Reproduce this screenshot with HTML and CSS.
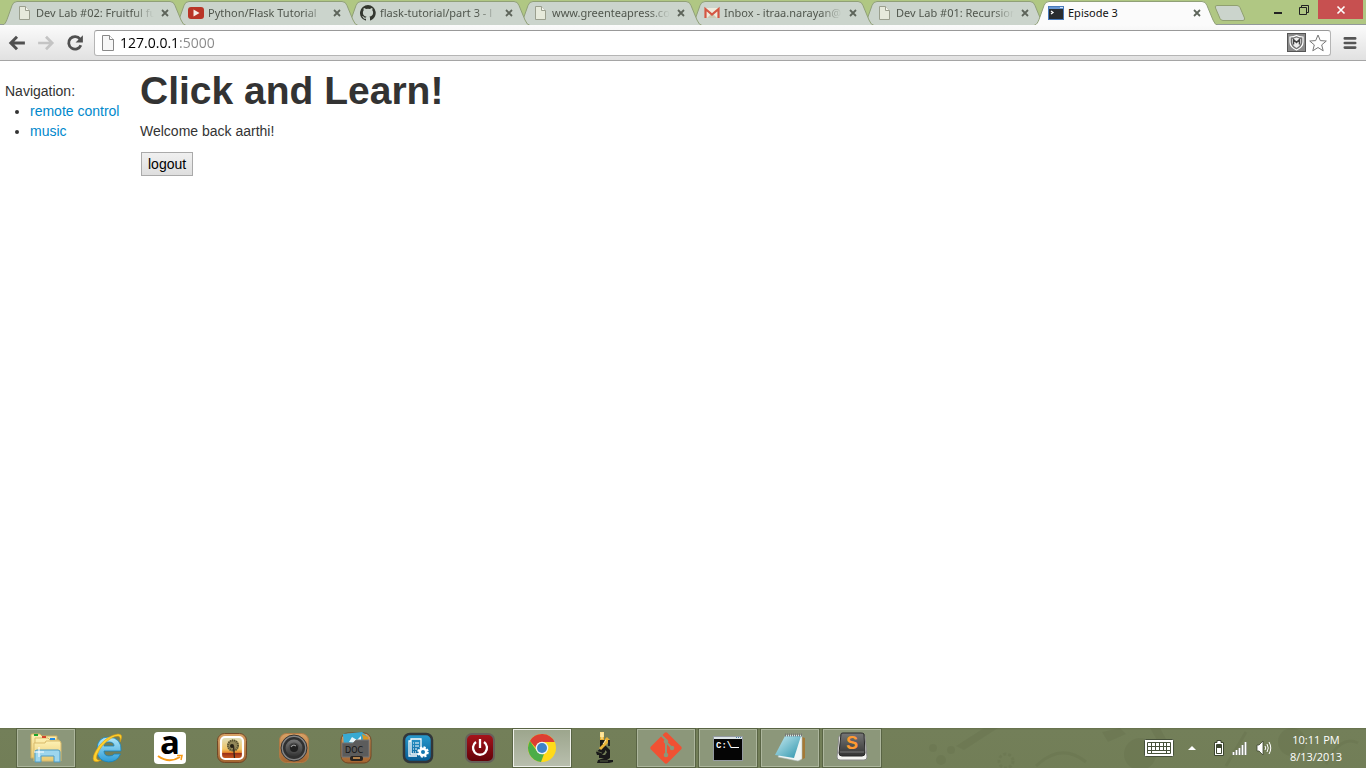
FILE: index.html
```html
<!DOCTYPE html>
<html lang="en">
<head>
<meta charset="utf-8">
<title>Episode 3</title>
<link rel="stylesheet" href="styles.css">
</head>
<body>
<svg class="defs" aria-hidden="true">
  <defs>
    <symbol id="tab" viewBox="0 0 184 24" preserveAspectRatio="none">
      <path d="M0 24.500C3 23.500 4 21 5 18.500L10 4.500Q11.200 .5 15 .5H168Q171.800 .5 173 4.500L179 19Q181 24 184 24.500Z"/>
    </symbol>
    <symbol id="page" viewBox="0 0 16 16"><path d="M3.500 1.500H9.500L13.500 5.500V14.500H3.500Z" fill="#e6eadb" stroke="#9a9f8e"/><path d="M9.500 1.500V5.500H13.500" fill="#f4f6ee" stroke="#9a9f8e"/></symbol>
    <symbol id="x" viewBox="0 0 8 8"><path d="M1 1L7 7M7 1L1 7" stroke="#5d645a" stroke-width="1.800"/></symbol>
    <linearGradient id="folder" x2="0" y2="1"><stop stop-color="#fdf1b4"/><stop offset="1" stop-color="#e9c970"/></linearGradient>
    <linearGradient id="sky" x2="0" y2="1"><stop stop-color="#b5eafb"/><stop offset="1" stop-color="#2b9bd5"/></linearGradient>
    <linearGradient id="wood" x2="0" y2="1"><stop stop-color="#d9a266"/><stop offset="1" stop-color="#a36430"/></linearGradient>
    <linearGradient id="sunset" x2="0" y2="1"><stop stop-color="#dfe0c0"/><stop offset=".55" stop-color="#f0c565"/><stop offset=".7" stop-color="#e98a2c"/><stop offset=".75" stop-color="#9c3218"/><stop offset="1" stop-color="#d2601e"/></linearGradient>
    <linearGradient id="gray" x2="0" y2="1"><stop stop-color="#777"/><stop offset="1" stop-color="#333"/></linearGradient>
    <linearGradient id="blue" x2="0" y2="1"><stop stop-color="#2a9ccf"/><stop offset="1" stop-color="#065a94"/></linearGradient>
    <linearGradient id="red" x2="0" y2="1"><stop stop-color="#a8141c"/><stop offset="1" stop-color="#600208"/></linearGradient>
    <linearGradient id="pad" x2="1" y2="1"><stop stop-color="#c9ecf2"/><stop offset="1" stop-color="#2a93ab"/></linearGradient>
  </defs>
</svg>

<header>
  <div class="tabstrip">
    <div class="tabs">
      <div class="tab t1"><svg class="shape"><use href="#tab"/></svg><svg class="fav"><use href="#page"/></svg><span class="title">Dev Lab #02: Fruitful fu</span><button class="shut" aria-label="Close tab"><svg><use href="#x"/></svg></button></div>
      <div class="tab t2"><svg class="shape"><use href="#tab"/></svg><svg class="fav" viewBox="0 0 16 16"><rect y="2" width="16" height="12" rx="3" fill="#b93527"/><path d="M5.500 4.500L11.500 8L5.500 11.500Z" fill="#f6eee6"/></svg><span class="title">Python/Flask Tutorial</span><button class="shut" aria-label="Close tab"><svg><use href="#x"/></svg></button></div>
      <div class="tab t3"><svg class="shape"><use href="#tab"/></svg><svg class="fav" viewBox="0 0 16 16"><path fill="#33372f" d="M8 0a8 8 0 0 0-2.500 15.600c.4.100.5-.2.500-.4v-1.500c-2.200.5-2.700-1-2.700-1-.4-.9-.9-1.200-.9-1.200-.7-.5.100-.5.100-.5.800.1 1.200.8 1.200.8.700 1.200 1.900.9 2.300.7.100-.5.300-.9.500-1.100-1.800-.2-3.600-.9-3.600-4 0-.9.300-1.600.8-2.100-.1-.3-.4-1.100.1-2.200 0 0 .7-.2 2.200.8a7.600 7.600 0 0 1 4 0c1.500-1 2.200-.8 2.200-.8.500 1.100.2 1.900.1 2.200.5.500.8 1.300.8 2.100 0 3.100-1.900 3.800-3.700 4 .3.300.6.800.6 1.500v2.200c0 .2.100.5.500.4A8 8 0 0 0 8 0"/></svg><span class="title">flask-tutorial/part 3 - l</span><button class="shut" aria-label="Close tab"><svg><use href="#x"/></svg></button></div>
      <div class="tab t4"><svg class="shape"><use href="#tab"/></svg><svg class="fav"><use href="#page"/></svg><span class="title">www.greenteapress.co</span><button class="shut" aria-label="Close tab"><svg><use href="#x"/></svg></button></div>
      <div class="tab t5"><svg class="shape"><use href="#tab"/></svg><svg class="fav" viewBox="0 0 16 16"><path d="M1 3H15V13H1Z" fill="#eeeadc"/><path d="M3 13L8 8L13 13Z" fill="#cbc9b3"/><path d="M1.500 13V4L8 9.500L14.500 4V13" fill="none" stroke="#d45743" stroke-width="2.200"/></svg><span class="title">Inbox - itraa.narayan@</span><button class="shut" aria-label="Close tab"><svg><use href="#x"/></svg></button></div>
      <div class="tab t6"><svg class="shape"><use href="#tab"/></svg><svg class="fav"><use href="#page"/></svg><span class="title">Dev Lab #01: Recursion</span><button class="shut" aria-label="Close tab"><svg><use href="#x"/></svg></button></div>
      <div class="tab active"><svg class="shape"><use href="#tab"/></svg><svg class="fav" viewBox="0 0 16 16"><rect y="1" width="16" height="14" fill="#292c30"/><rect y="1" width="16" height="3" fill="#6796d2"/><path d="M12 2.500H15" stroke="#d6e5f7"/><path d="M3 6L5 7.500L3 9" fill="none" stroke="#fff" stroke-width="1.300"/><rect x=".5" y="1.500" width="15" height="13" fill="none" stroke="#4779bb"/></svg><span class="title">Episode 3</span><button class="shut" aria-label="Close tab"><svg><use href="#x"/></svg></button></div>
    </div>
    <button class="newtab" aria-label="New tab"><svg viewBox="0 0 32 16"><path d="M3 .5H23Q25 .5 26 2.500L30.500 13Q31 15.500 29 15.500H9Q7 15.500 6 13.500L1.500 3Q.5 .5 3 .5Z" fill="#cbd4cc" stroke="#90a070"/></svg></button>
    <div class="window">
      <button aria-label="Minimize"><svg viewBox="0 0 10 10"><path d="M1 8H9" stroke="#222" stroke-width="2"/></svg></button>
      <button aria-label="Restore"><svg viewBox="0 0 10 10"><path d="M2.500 2V.5H9.500V7.500H8M.5 2.500H7.500V9.500H.5Z" fill="none" stroke="#222"/></svg></button>
      <button class="quit" aria-label="Close"><svg viewBox="0 0 10 10"><path d="M1.500 1.500L8.500 8.500M8.500 1.500L1.500 8.500" stroke="#fff" stroke-width="1.600"/></svg></button>
    </div>
  </div>
  <div class="toolbar">
    <button aria-label="Back"><svg viewBox="0 0 16 16"><path d="M15 8H2.500M8 2.500L2.500 8L8 13.500" fill="none" stroke="#505050" stroke-width="2.600"/></svg></button>
    <button aria-label="Forward"><svg viewBox="0 0 16 16"><path d="M1 8H13.500M8 2.500L13.500 8L8 13.500" fill="none" stroke="#c4c4c4" stroke-width="2.400"/></svg></button>
    <button aria-label="Reload"><svg viewBox="0 0 16 16"><path d="M12.500 4.500A5.600 5.600 0 1 0 13.200 10" fill="none" stroke="#505050" stroke-width="2.500"/><path d="M15 1V7.500H8.500Z" fill="#505050"/></svg></button>
    <div class="omnibox">
      <svg viewBox="0 0 14 16"><path d="M1.500 .5H8.500L12.500 4.500V15.500H1.500Z" fill="#f7f7f7" stroke="#888"/><path d="M8.500 .5V4.500H12.500" fill="#fff" stroke="#888"/></svg>
      <input class="url" type="text" aria-label="Address" value="127.0.0.1:5000">
      <button class="shield" aria-label="Site advisor"><svg viewBox="0 0 19 19"><rect width="19" height="19" rx="1" fill="#8a8a8a"/><rect x=".5" y=".5" width="18" height="18" fill="none" stroke="#555"/><path d="M3 4Q7 4 9.500 2.500Q12 4 16 4V9Q16 14 9.500 17Q3 14 3 9Z" fill="#707070" stroke="#fff" stroke-width="1.200"/><path d="M5 6L9.500 4.500L14 6V10Q13 13 9.500 15Q6 13 5 10Z" fill="#eee"/><path d="M6.500 11.500V6.500L9.500 9.500L12.500 6.500V11.500" fill="none" stroke="#444" stroke-width="1.500"/></svg></button>
      <button class="star" aria-label="Bookmark"><svg viewBox="0 0 18 18"><path d="M9 1L11.300 6.600L17.300 7L12.700 10.900L14.200 16.800L9 13.500L3.800 16.800L5.300 10.900L.7 7L6.700 6.600Z" fill="#fff" stroke="#777" stroke-linejoin="round"/></svg></button>
    </div>
    <button class="menu" aria-label="Menu"><svg viewBox="0 0 14 14"><path d="M2.500 3H11.500M2.500 7H11.500M2.500 11H11.500" stroke="#555" stroke-width="2.400" stroke-linecap="round"/></svg></button>
  </div>
</header>

<main>
  <nav>
    Navigation:
    <ul>
      <li><a href="#">remote control</a></li>
      <li><a href="#">music</a></li>
    </ul>
  </nav>
  <section>
    <h1>Click and Learn!</h1>
    <p>Welcome back aarthi!</p>
    <button class="logout">logout</button>
  </section>
</main>

<footer>
  <svg class="pattern" viewBox="0 0 440 40" aria-hidden="true"><g fill="#4b5636"><circle cx="7" cy="20" r="4"/><circle cx="15" cy="32" r="5"/><circle cx="25" cy="22" r="4"/><path d="M30 18L58 0H72L38 22ZM176 4l18-4 6 6-18 8ZM224 0l8 14 8-3-6-11Z"/><circle cx="214" cy="26" r="16"/><circle cx="366" cy="14" r="14"/></g><g fill="none" stroke="#4b5636" stroke-width="3"><circle cx="80" cy="33" r="7" stroke-dasharray="3 2"/><path d="M110 38Q135 14 160 34M300 38L320 4M400 36Q415 6 432 15"/></g></svg>
  <div class="apps">
    <button class="app open" aria-label="File Explorer"><svg viewBox="0 0 32 32"><path d="M1 3Q1 2 2 2H10L12 4H27V26H1Z" fill="url(#folder)" stroke="#cfae5e"/><path d="M8 6H18L20 8H29V28H5V6Z" fill="url(#folder)" stroke="#d9bb6c"/><path d="M16 9H30L31 11V29H4V11H15Z" fill="url(#folder)" stroke="#d9bb6c"/><path d="M4 3H8" stroke="#18a52b" stroke-width="2"/><path d="M12 5H16" stroke="#d6452d" stroke-width="2"/><path d="M20 7H25" stroke="#268be0" stroke-width="2"/><path d="M5 30V20Q5 18 7 18H28Q30 18 30 20V30H24V24H11V30Z" fill="#9ed6ed" stroke="#4d9bc3"/><path d="M9 15V25M4 20H14" stroke="#fff"/></svg></button>
    <button class="app" aria-label="Internet Explorer"><svg viewBox="0 0 32 32"><path d="M29 19H12Q12 24 17 24Q21 24 22 22H28.500Q25 30 16.500 30Q5 29 5 17.500Q5 5 17 5Q30 6 29 19ZM12 14H22Q22 10 17 10Q12 10 12 14Z" fill="url(#sky)" stroke="#1584be" stroke-width=".8"/><path d="M28 10Q32 2 26 2Q16 3 7 14Q-1 25 2 29Q5 31 9 28Q3 29 5 23Q9 13 18 7Q30 0 28 10Z" fill="#ffd12d" stroke="#d99b13" stroke-width=".6"/></svg></button>
    <button class="app" aria-label="Amazon"><svg viewBox="0 0 32 32"><rect width="32" height="32" rx="4" fill="#fff"/><text x="16" y="22" text-anchor="middle" class="amazon">a</text><path d="M4 24Q15 32 26 25" fill="none" stroke="#f79a15" stroke-width="2"/><path d="M23 23.500H28L27 28" fill="none" stroke="#f79a15" stroke-width="1.500"/></svg></button>
    <button class="app" aria-label="Photos"><svg viewBox="0 0 32 32"><rect x="1.500" y="1.500" width="29" height="29" rx="7" fill="url(#wood)" stroke="#704726"/><rect x="5" y="5" width="22" height="22" rx="4" fill="url(#sunset)" stroke="#fff" stroke-width="2.200"/><circle cx="17" cy="13.500" r="6" fill="#928759"/><circle cx="17" cy="13.500" r="5" fill="none" stroke="#57502f" stroke-width="2" stroke-dasharray="1 1"/><circle cx="16" cy="14" r="2" fill="#252013"/><path d="M17.500 14L18.500 26" stroke="#30251b" stroke-width="1.300"/></svg></button>
    <button class="app" aria-label="Music"><svg viewBox="0 0 32 32"><rect x="1.500" y="1.500" width="29" height="29" rx="7" fill="url(#wood)" stroke="#b07a45"/><circle cx="16" cy="16" r="13" fill="#858585" stroke="#333"/><circle cx="16" cy="16" r="11" fill="#303030"/><circle cx="16" cy="16" r="8.500" fill="url(#gray)"/><circle cx="16" cy="16" r="5.500" fill="#4a4a4a"/><circle cx="16" cy="16" r="4" fill="#202020"/><path d="M13 15Q15 12 18 14" fill="none" stroke="#999" stroke-width="1.200"/></svg></button>
    <button class="app" aria-label="Documents"><svg viewBox="0 0 32 32"><rect x="1" y="1" width="30" height="30" rx="7" fill="url(#wood)" stroke="#704726"/><path d="M3 2L22 0L28 5V14H4Z" fill="#38aad1"/><path d="M9 10L12 5L17 8L21 4V12Z" fill="#e7f7fb"/><path d="M22 2L28 5V11H24Z" fill="#d99522"/><path d="M2 11H13L16 8H29V25H2Z" fill="#5c5c5c" stroke="#777"/><text x="5" y="21" class="doc">DOC</text><rect x="10" y="24" width="13" height="5" rx="2" fill="#292522"/><path d="M13 26H20" stroke="#e0a25d" stroke-width="1.500"/></svg></button>
    <button class="app" aria-label="Settings"><svg viewBox="0 0 32 32"><rect x="2" y="2" width="28" height="28" rx="6" fill="url(#blue)" stroke="#31363a" stroke-width="2.500"/><path d="M9 7H19V22H9ZM9 9H7V24H15" fill="none" stroke="#fff" stroke-width="1.300"/><path d="M11 11H17M11 14H17M11 17H15M11 20H14" stroke="#fff" stroke-dasharray="1 1 8"/><circle cx="21" cy="20" r="4.500" fill="#fff" stroke="#fff" stroke-width="2.500" stroke-dasharray="2 1.534"/><circle cx="21" cy="20" r="2" fill="#1678b1"/></svg></button>
    <button class="app" aria-label="Power"><svg viewBox="0 0 32 32"><rect x="2" y="2" width="28" height="28" rx="6" fill="url(#red)" stroke="#66605a" stroke-width="2"/><path d="M12 10A7 7 0 1 0 20 10M16 7V16" fill="none" stroke="#fff" stroke-width="2.300"/></svg></button>
    <button class="app open current" aria-label="Chrome"><svg viewBox="0 0 32 32"><circle cx="16" cy="16" r="14" fill="#ffda19"/><path d="M3.900 9A14 14 0 0 1 28.600 10H16Q11 10 10 16Z" fill="#dd3e32"/><path d="M3.900 9L10.800 19Q14 23 18 22L15 30A14 14 0 0 1 3.900 9Z" fill="#4cad48"/><circle cx="16" cy="16" r="6.300" fill="#edf3f4"/><circle cx="16" cy="16" r="5" fill="#3e83c8"/></svg></button>
    <button class="app" aria-label="Microscope"><svg viewBox="0 0 32 32"><path d="M12 8H17V20L14 23H9L8 20L12 17ZM17 13L22 18L22 26L19 28H25V30L21 31H9L10 28L16 26H11V23H17L19 20L16 17Z" fill="#191919"/><path d="M12 0H16V5H12Z" fill="#ffe08a"/><path d="M12 5H16V8H12ZM17 7L19 5L22 8L19 12L16 15L13 18L11 16L16 11Z" fill="#e9b338"/><path d="M14 1V7M18 8L15 12" stroke="#fff0b8"/><path d="M21 8V14" stroke="#222" stroke-width="2"/><path d="M8 19L14 21M12 29L20 29" stroke="#596044"/></svg></button>
    <button class="app open" aria-label="Git"><svg viewBox="0 0 32 32"><path d="M14.500 1Q16 -.5 17.500 1L31 14.500Q32.500 16 31 17.500L17.500 31Q16 32.500 14.500 31L1 17.500Q-.5 16 1 14.500Z" fill="#f05133"/><path d="M11.500 3.500L16 8V24M16 10L21.500 15.500" fill="none" stroke="#8c977a" stroke-width="2"/><circle cx="16" cy="9.500" r="2.300" fill="#8c977a"/><circle cx="16" cy="23" r="2.300" fill="#8c977a"/><circle cx="22" cy="16" r="2.300" fill="#8c977a"/></svg></button>
    <button class="app open" aria-label="Command Prompt"><svg viewBox="0 0 32 32"><rect x="1.500" y="4.500" width="29" height="24" fill="#050505" stroke="#949aa0"/><path d="M2 5H30V7H2Z" fill="#dce4e8"/><path d="M24 5.500H29" stroke="#4f82a9" stroke-dasharray="1 1"/><text x="4" y="16" class="cmd">C:\</text><path d="M19 15.500H27" stroke="#fff"/></svg></button>
    <button class="app open" aria-label="Notepad"><svg viewBox="0 0 32 32"><path d="M25 4L31 6V26L27 28Z" fill="#a37937"/><path d="M12 3H28V27L24 29L4 25Z" fill="#eff5f4" stroke="#b0bcbb" stroke-width=".6"/><path d="M11 4H27L20 26L1 23Z" fill="url(#pad)"/><path d="M11 3H28" stroke="#777" stroke-width="3" stroke-dasharray="1 1"/></svg></button>
    <button class="app open" aria-label="Sublime Text"><svg viewBox="0 0 32 32"><path d="M3 4L1 25Q1 28 4 28H28Q31 28 31 25L29 4Z" fill="#f5f5f2" stroke="#888"/><path d="M5 2Q5 1 7 1H25Q27 1 28 2L29 21Q29 24 26 24H6Q3 24 3 21Z" fill="url(#gray)" stroke="#282828"/><path d="M4 20H28" stroke="#777"/><text x="16" y="17" text-anchor="middle" class="sublime">S</text></svg></button>
  </div>
  <div class="tray">
    <button aria-label="Touch keyboard"><svg class="keyboard" viewBox="0 0 30 18"><rect x=".5" y=".5" width="29" height="17" rx="1" fill="#fff" stroke="#46513a"/><path d="M3.500 3.500H26.500V14.500H3.500ZM3 7.500H27M3 11.500H27M7.500 3V15M11.500 3V11M15.500 3V11M19.500 3V11M22.500 3V15" fill="none" stroke="#46513a"/></svg></button>
    <button aria-label="Show hidden icons"><svg class="arrow" viewBox="0 0 8 6"><path d="M0 5L4 1L8 5Z" fill="#fff"/></svg></button>
    <div class="status">
      <svg class="battery" viewBox="0 0 10 16"><path d="M3 .5H7V2.500H9.500V15.500H.5V2.500H3Z" fill="#fff" stroke="#3c4630"/><path d="M3 5H7V8H3Z" fill="#3c4630"/><path d="M2.500 4.500H7.500V13.500H2.500Z" fill="none" stroke="#3c4630"/></svg>
      <svg class="signal" viewBox="0 0 16 14"><path d="M1.500 14V11M4.500 14V9M7.500 14V7M10.500 14V4M13.500 14V1" stroke="#3c4630" stroke-width="3"/><path d="M1.500 14V11M4.500 14V9M7.500 14V7M10.500 14V4M13.500 14V1" stroke="#fff" stroke-width="2"/></svg>
      <svg class="sound" viewBox="0 0 16 16"><path d="M1 5H3L7 1V15L3 11H1Z" fill="#fff" stroke="#3c4630" stroke-width=".8"/><path d="M9 6Q10.500 8 9 10M11 4Q13.500 8 11 12M13 2Q16.500 8 13 14" fill="none" stroke="#fff"/></svg>
    </div>
    <time datetime="2013-08-13T22:11">10:11 PM<br>8/13/2013</time>
  </div>
</footer>
</body>
</html>
```
FILE: styles.css
```css
* { box-sizing: border-box; }
body { margin: 0; min-height: 100vh; display: flex; flex-direction: column; background: #fff; color: #333; font: 14px/20px "Liberation Sans", Arial, sans-serif; }
button { margin: 0; padding: 0; border: 0; background: none; font: inherit; color: inherit; }
svg { display: block; flex-shrink: 0; }
.defs { position: absolute; width: 0; height: 0; }

.tabstrip { display: flex; align-items: flex-start; height: 25px; padding: 1px 3px 0 2px; background: #b0c783; border-bottom: 1px solid #92999a; font: 11px/16px "Noto Sans", "Open Sans", sans-serif; }
.tabs { display: flex; min-width: 0; }
.tab { position: relative; display: flex; align-items: center; width: 184px; height: 24px; margin-right: -12px; padding: 0 13px 0 14px; color: #50564d; z-index: 1; }
.t1 { z-index: 6; }
.t2 { z-index: 5; }
.t3 { z-index: 4; }
.t4 { z-index: 3; }
.t5 { z-index: 2; }
.active { z-index: 7; color: #111; }
.shape { position: absolute; inset: 0; width: 100%; height: 100%; z-index: -1; fill: #cbd4cc; stroke: #90a077; }
.active .shape { fill: #fbfbfb; overflow: visible; }
.fav { width: 16px; height: 16px; margin-right: 4px; }
.title { flex: 1; overflow: hidden; white-space: nowrap; mask-image: linear-gradient(to right, #000 82%, transparent 100%); }
.active .title { mask-image: none; }
.shut { display: grid; place-items: center; width: 16px; height: 16px; margin-left: 3px; }
.shut svg { width: 8px; height: 8px; }
.newtab { margin: 4px 0 0 8px; }
.newtab svg { width: 32px; height: 16px; }
.window { display: flex; margin-left: auto; }
.window button { display: grid; place-items: center; width: 26px; height: 18px; }
.window svg { width: 10px; height: 10px; }
.window .quit { width: 45px; margin-left: 1px; background: #c75050; box-shadow: 0 -1px #c75050; }

.toolbar { display: flex; align-items: center; height: 36px; padding: 0 8px; background: linear-gradient(#fbfbfb, #e1e1e1); border-bottom: 1px solid #a5a5a5; }
.toolbar > button { width: 18px; margin-right: 11px; }
.toolbar > button svg { width: 18px; height: 18px; }
.toolbar > .menu { margin: 0 0 0 11px; width: 16px; }
.toolbar > .menu svg { width: 16px; height: 16px; }
.omnibox { flex: 1; display: flex; align-items: center; height: 26px; margin-left: -1px; padding: 0 3px 0 6px; background: #fff; border: 1px solid #b5b5b5; border-top-color: #999; border-radius: 3px; }
.omnibox > svg { width: 14px; height: 16px; }
.url { flex: 1; min-width: 0; height: 24px; margin-left: 5px; padding: 0; border: 0; outline: 0; font: 14px/24px "Open Sans", "Noto Sans", sans-serif; color: transparent; background: linear-gradient(to right, #000 59px, #888 59px); background-clip: text; -webkit-background-clip: text; }
.shield svg { width: 19px; height: 19px; }
.star { margin-left: 3px; }
.star svg { width: 18px; height: 18px; }

main { flex: 1; display: flex; padding: 10px 5px; }
nav { width: 135px; padding-top: 10px; }
nav ul { margin: 0; padding-left: 25px; }
a { color: #08c; text-decoration: none; }
h1 { margin: 0 0 10px; font-size: 39px; line-height: 40px; }
p { margin: 0 0 10px; }
.logout { height: 24px; margin: 1px; padding: 0 6px; border: 1px solid #aaa; background: linear-gradient(#f0f0f0, #dedede); color: #000; }

footer { position: relative; display: flex; justify-content: space-between; height: 40px; padding: 0 24px 0 16px; background: linear-gradient(#65704b, #737f59 2px, #727e57); color: #fff; overflow: hidden; }
.pattern { position: absolute; right: 0; top: 0; width: 440px; height: 40px; opacity: .12; }
.apps { position: relative; display: flex; gap: 2px; }
.app { display: grid; place-items: center; width: 60px; height: 40px; border: 1px solid transparent; }
.app svg { width: 32px; height: 32px; }
.open { border-color: #596444; background: #8c977a; box-shadow: inset 0 0 0 1px #adb69d; }
.current { background: linear-gradient(#9ca58c, #b9bfae); box-shadow: inset 0 0 0 1px #eef0e9; }
.amazon { font: bold 33px "Open Sans", sans-serif; }
.doc { font: 8px "DejaVu Sans", sans-serif; fill: #141414; }
.cmd { font: bold 9px "Liberation Mono", monospace; fill: #fff; }
.sublime { font: bold 18px "Liberation Sans", sans-serif; fill: #ff9a31; }
.tray { position: relative; display: flex; align-items: center; gap: 14px; }
.keyboard { width: 30px; height: 18px; }
.arrow { width: 8px; height: 6px; }
.status { display: flex; align-items: center; gap: 8px; margin: 0 4px; }
.battery { width: 10px; height: 16px; }
.signal { width: 16px; height: 14px; }
.sound { width: 16px; height: 16px; }
time { font: 11px/17px "Open Sans", "Noto Sans", sans-serif; text-align: center; }
```
